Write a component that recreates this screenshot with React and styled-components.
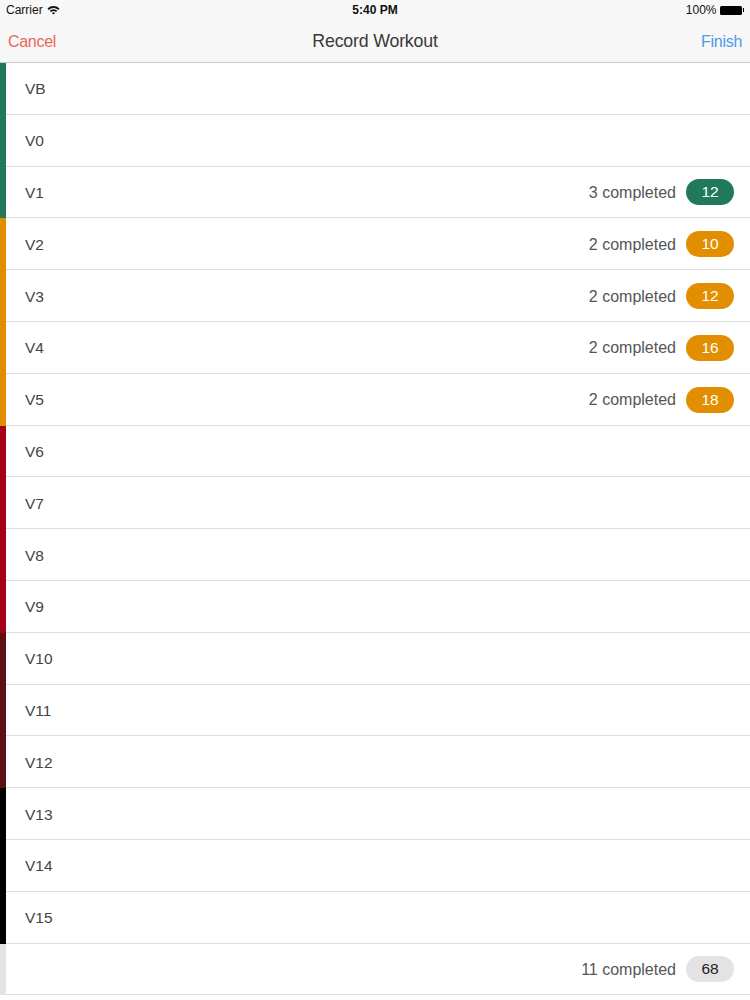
import React from "react";
import styled, { createGlobalStyle } from "styled-components";

const Global = createGlobalStyle`
  html, body { margin: 0; padding: 0; background: #fff; }
  body { font-family: "Liberation Sans", Arial, sans-serif; -webkit-font-smoothing: antialiased; }
  * { box-sizing: border-box; }
`;

const Screen = styled.div`
  width: 750px;
  height: 1000px;
  overflow: hidden;
  background: #fff;
  display: flex;
  flex-direction: column;
`;

const Header = styled.div`
  background: #f7f7f7;
  border-bottom: 1px solid #c9c9cc;
  height: 63px;
  display: flex;
  flex-direction: column;
`;

const StatusBar = styled.div`
  height: 20px;
  display: grid;
  grid-template-columns: 1fr auto 1fr;
  align-items: center;
  padding: 0 6px;
  font-size: 12px;
  color: #111;
`;

const StatusLeft = styled.div`
  display: flex;
  align-items: center;
  gap: 4px;
`;

const StatusCenter = styled.div`
  font-weight: bold;
  font-size: 12px;
`;

const StatusRight = styled.div`
  display: flex;
  justify-content: flex-end;
  align-items: center;
  gap: 3px;
`;

const Battery = styled.div`
  display: flex;
  align-items: center;
  &::before {
    content: "";
    width: 22px;
    height: 9px;
    background: #000;
    border-radius: 1.5px;
  }
  &::after {
    content: "";
    width: 1.5px;
    height: 4px;
    background: #000;
    margin-left: 1px;
  }
`;

const NavBar = styled.div`
  flex: 1;
  display: grid;
  grid-template-columns: 1fr auto 1fr;
  align-items: center;
  padding: 1px 8px 0;
`;

const NavButton = styled.div`
  font-size: 16px;
  color: ${(p) => p.$color};
  text-align: ${(p) => p.$align};
  letter-spacing: -0.3px;
`;

const Title = styled.div`
  font-size: 17.8px;
  color: #3a3a3a;
  letter-spacing: -0.2px;
`;

const List = styled.div`
  display: flex;
  flex-direction: column;
`;

const Row = styled.div`
  height: 51.8px;
  display: flex;
`;

const Strip = styled.div`
  width: 6px;
  flex: none;
  background: ${(p) => p.$color};
`;

const RowBody = styled.div`
  flex: 1;
  display: flex;
  align-items: center;
  border-bottom: 1px solid #dedede;
  padding: 2px 16px 0 19px;
`;

const Grade = styled.div`
  font-size: 15.5px;
  color: #444;
  flex: 1;
`;

const Completed = styled.div`
  font-size: 16px;
  color: #555;
  margin-right: 10px;
`;

const Badge = styled.div`
  width: 48px;
  height: 26px;
  border-radius: 13px;
  background: ${(p) => p.$bg};
  color: ${(p) => p.$fg};
  font-size: 15.5px;
  display: flex;
  align-items: center;
  justify-content: center;
  margin-top: -1px;
`;

const GREEN = "#207a5a";
const ORANGE = "#e18f00";
const RED = "#a40016";
const MAROON = "#5e0f14";
const BLACK = "#000";

const rows = [
  { g: "VB", c: GREEN },
  { g: "V0", c: GREEN },
  { g: "V1", c: GREEN, done: 3, n: 12 },
  { g: "V2", c: ORANGE, done: 2, n: 10 },
  { g: "V3", c: ORANGE, done: 2, n: 12 },
  { g: "V4", c: ORANGE, done: 2, n: 16 },
  { g: "V5", c: ORANGE, done: 2, n: 18 },
  { g: "V6", c: RED },
  { g: "V7", c: RED },
  { g: "V8", c: RED },
  { g: "V9", c: RED },
  { g: "V10", c: MAROON },
  { g: "V11", c: MAROON },
  { g: "V12", c: MAROON },
  { g: "V13", c: BLACK },
  { g: "V14", c: BLACK },
  { g: "V15", c: BLACK },
];

const Wifi = () => (
  <svg width="13" height="10" viewBox="0 0 13 10">
    <path d="M0.5 3.6 A8.5 8.5 0 0 1 12.5 3.6 L11.2 4.9 A6.7 6.7 0 0 0 1.8 4.9 Z" fill="#111" />
    <path d="M2.7 5.8 A5.4 5.4 0 0 1 10.3 5.8 L9 7.1 A3.6 3.6 0 0 0 4 7.1 Z" fill="#111" />
    <path d="M4.9 8 A2.3 2.3 0 0 1 8.1 8 L6.5 9.6 Z" fill="#111" />
  </svg>
);

export default function App() {
  return (
    <Screen>
      <Global />
      <Header>
        <StatusBar>
          <StatusLeft>
            Carrier <Wifi />
          </StatusLeft>
          <StatusCenter>5:40 PM</StatusCenter>
          <StatusRight>
            100% <Battery />
          </StatusRight>
        </StatusBar>
        <NavBar>
          <NavButton $color="#e8685a" $align="left">Cancel</NavButton>
          <Title>Record Workout</Title>
          <NavButton $color="#4d9be6" $align="right">Finish</NavButton>
        </NavBar>
      </Header>
      <List>
        {rows.map((r) => (
          <Row key={r.g}>
            <Strip $color={r.c} />
            <RowBody>
              <Grade>{r.g}</Grade>
              {r.done && (
                <>
                  <Completed>{r.done} completed</Completed>
                  <Badge $bg={r.c} $fg="#fff">{r.n}</Badge>
                </>
              )}
            </RowBody>
          </Row>
        ))}
        <Row>
          <Strip $color="#e3e3e5" />
          <RowBody>
            <Grade />
            <Completed>11 completed</Completed>
            <Badge $bg="#e3e3e5" $fg="#222">68</Badge>
          </RowBody>
        </Row>
      </List>
    </Screen>
  );
}
